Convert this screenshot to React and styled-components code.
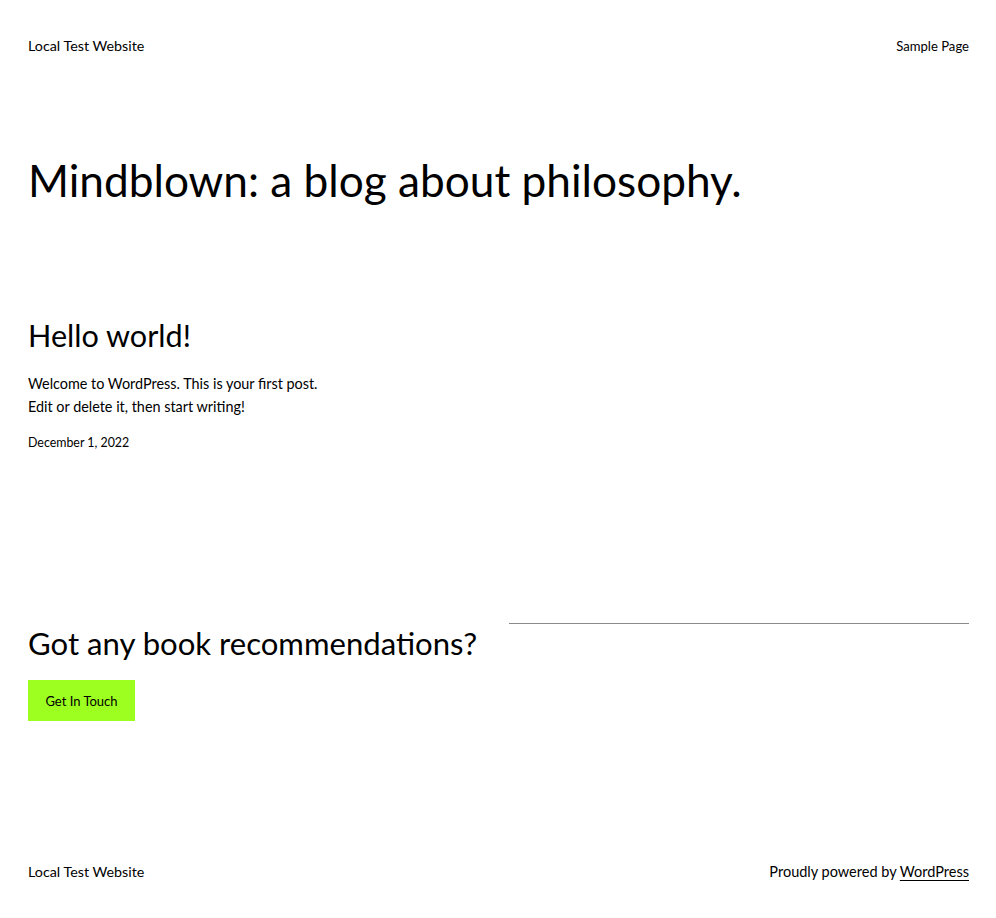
import React from "react";
import styled, { createGlobalStyle } from "styled-components";

const Global = createGlobalStyle`
  html, body { margin: 0; padding: 0; background: #ffffff; }
  body {
    font-family: "Lato", "Noto Sans", sans-serif;
    color: #000000;
    -webkit-font-smoothing: antialiased;
  }
`;

const Page = styled.div`
  display: flex;
  flex-direction: column;
  padding: 0 27px 0 28px;
  min-height: 918px;
  box-sizing: border-box;
`;

const Bar = styled.div`
  display: flex;
  justify-content: space-between;
  align-items: center;
  height: 24px;
  margin-top: ${(p) => p.$top}px;
  font-size: 14.5px;
  line-height: 24px;
`;

const BarLink = styled.a`
  color: #000;
  font-size: ${(p) => p.$size || 14.5}px;
  text-decoration: ${(p) => (p.$underline ? "underline" : "none")};
  text-decoration-thickness: 1px;
  text-underline-offset: 3px;
`;

const Title = styled.h1`
  margin: 90px 0 0;
  font-size: 44.2px;
  font-weight: 400;
  line-height: 64px;
`;

const Post = styled.article`
  margin-top: 100px;
  display: flex;
  flex-direction: column;
`;

const PostTitle = styled.h2`
  margin: 0;
  font-size: 30.6px;
  font-weight: 400;
  line-height: 48px;
`;

const PostBody = styled.p`
  margin: 12px 0 0;
  font-size: 14.4px;
  line-height: 23px;
`;

const PostDate = styled.time`
  margin-top: 15px;
  font-size: 12.4px;
  line-height: 20px;
`;

const Cta = styled.section`
  margin-top: 166px;
  display: grid;
  grid-template-columns: 1fr 1fr;
  column-gap: 21px;
  align-items: start;
`;

const CtaCol = styled.div`
  display: flex;
  flex-direction: column;
  align-items: flex-start;
`;

const CtaTitle = styled.h2`
  margin: 0;
  font-size: 31.1px;
  font-weight: 400;
  line-height: 48px;
  white-space: nowrap;
`;

const Button = styled.a`
  margin-top: 13px;
  display: inline-flex;
  align-items: center;
  justify-content: center;
  width: 107px;
  height: 41px;
  background: #9dff20;
  color: #000;
  font-size: 13px;
  text-decoration: none;
`;

const Rule = styled.hr`
  width: 100%;
  margin: 4px 0 0;
  border: none;
  border-top: 1px solid #8a8a8a;
  height: 0;
`;

const Spacer = styled.div`
  flex: 1;
`;

export default function App() {
  return (
    <>
      <Global />
      <Page>
        <Bar $top={34}>
          <BarLink href="#" $size={14.3}>Local Test Website</BarLink>
          <BarLink href="#" $size={13.1}>Sample Page</BarLink>
        </Bar>
        <Title>Mindblown: a blog about philosophy.</Title>
        <Post>
          <PostTitle>Hello world!</PostTitle>
          <PostBody>
            Welcome to WordPress. This is your first post.
            <br />
            Edit or delete it, then start writing!
          </PostBody>
          <PostDate>December 1, 2022</PostDate>
        </Post>
        <Cta>
          <CtaCol>
            <CtaTitle>Got any book recommendations?</CtaTitle>
            <Button href="#">Get In Touch</Button>
          </CtaCol>
          <CtaCol>
            <Rule />
          </CtaCol>
        </Cta>
        <Bar $top={139}>
          <BarLink href="#" $size={14.3}>Local Test Website</BarLink>
          <span>
            Proudly powered by <BarLink href="#" $underline>WordPress</BarLink>
          </span>
        </Bar>
        <Spacer />
      </Page>
    </>
  );
}
